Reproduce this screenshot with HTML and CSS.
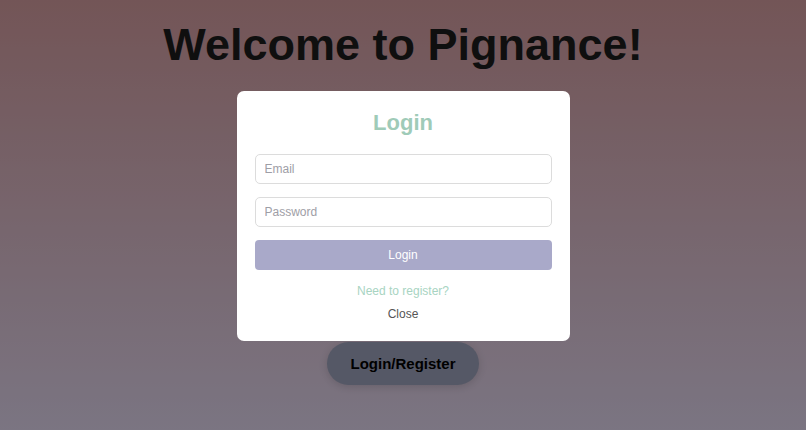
FILE: index.html
```html
<!DOCTYPE html>
<html lang="en">
<head>
    <meta charset="UTF-8">
    <meta name="viewport" content="width=device-width, initial-scale=1.0">
    <title>Pignance</title>
    <link rel="stylesheet" href="styles.css">
</head>
<body>
    <div class="home">
        <h1>Welcome to Pignance!</h1>
        <button class="open-btn">Login/Register</button>
    </div>

    <div class="overlay">
        <div class="modal">
            <h2>Login</h2>
            <form class="auth-form">
                <input type="email" placeholder="Email" />
                <input type="password" placeholder="Password" />
                <button type="button" class="submit-btn">Login</button>
            </form>
            <a class="switch-link">Need to register?</a>
            <button class="close-btn">Close</button>
        </div>
    </div>
</body>
</html>
```

FILE: styles.css
```css
* {
    margin: 0;
    padding: 0;
    box-sizing: border-box;
}

body {
    font-family: "Liberation Sans", Arial, sans-serif;
    background: linear-gradient(to bottom, #c08e91, #cdc3d9);
    height: 100vh;
    overflow: hidden;
}

.home {
    display: flex;
    flex-direction: column;
    align-items: center;
}

h1 {
    font-size: 45px;
    color: #1a1a1a;
    margin-top: 19px;
}

.open-btn {
    margin-top: 271px;
    padding: 0 23px;
    height: 43px;
    border: none;
    border-radius: 22px;
    background-color: #8e93aa;
    color: #000;
    font-family: inherit;
    font-size: 15px;
    font-weight: bold;
    box-shadow: 0 2px 8px rgba(0, 0, 0, 0.15);
}

/* Modal */
.overlay {
    position: fixed;
    inset: 0;
    padding-top: 2px;
    background-color: rgba(0, 0, 0, 0.4);
    display: flex;
    justify-content: center;
    align-items: center;
}

.modal {
    background-color: #fff;
    width: 333px;
    padding: 19px 18px 20px;
    border-radius: 7px;
    display: flex;
    flex-direction: column;
    align-items: center;
}

.modal h2 {
    font-size: 22px;
    color: #9fcbb8;
    line-height: 25px;
    margin-bottom: 19px;
}

.auth-form {
    width: 100%;
    display: flex;
    flex-direction: column;
    gap: 13px;
}

.auth-form input {
    height: 30px;
    padding: 0 9px;
    border: 1px solid #dcdcdc;
    border-radius: 5px;
    font-family: inherit;
    font-size: 12px;
}

.auth-form input::placeholder {
    color: #9e9ea6;
}

.submit-btn {
    height: 30px;
    border: none;
    border-radius: 4px;
    background-color: #a9a9c9;
    color: #fff;
    font-family: inherit;
    font-size: 12px;
}

.switch-link {
    margin-top: 14px;
    font-size: 12px;
    line-height: 14px;
    color: #a8d4c2;
    cursor: pointer;
}

.close-btn {
    margin-top: 9px;
    background: none;
    border: none;
    font-family: inherit;
    font-size: 12px;
    line-height: 14px;
    color: #555;
    cursor: pointer;
}
```
